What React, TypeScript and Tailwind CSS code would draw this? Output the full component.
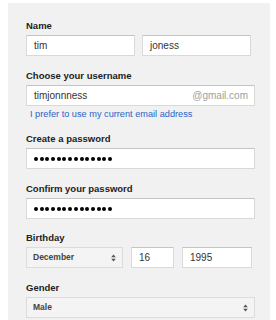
import React from 'react';

const font = { fontFamily: '"Liberation Sans", Arial, sans-serif' };

function Label({ children, className = '' }: { children: React.ReactNode; className?: string }) {
  return <div className={`text-[9.5px] font-bold leading-[12px] text-[#222] mb-[3px] ${className}`}>{children}</div>;
}

function Box({ children, className = '' }: { children?: React.ReactNode; className?: string }) {
  return (
    <div className={`h-[21px] border border-[#d9d9d9] border-t-[#c4c4c4] bg-white flex items-center pl-[7px] pr-[6px] text-[10px] text-[#333] ${className}`}>
      {children}
    </div>
  );
}

function Arrows() {
  return (
    <svg width="5" height="8" viewBox="0 0 5 8" className="ml-auto">
      <path d="M2.5 0.5 L4.8 3.2 L0.2 3.2 Z" fill="#555" />
      <path d="M2.5 7.5 L4.8 4.8 L0.2 4.8 Z" fill="#555" />
    </svg>
  );
}

function Dots() {
  return (
    <div className="flex gap-[1.7px]">
      {Array.from({ length: 14 }).map((_, i) => (
        <span key={i} className="block w-[4px] h-[4px] rounded-full bg-black" />
      ))}
    </div>
  );
}

function Select({ children, className = '' }: { children: React.ReactNode; className?: string }) {
  return (
    <div className={`h-[21px] border border-[#dcdcdc] bg-[#f4f4f4] flex items-center pl-[6px] pr-[6px] text-[8.5px] font-bold text-[#444] ${className}`}>
      {children}
      <Arrows />
    </div>
  );
}

export default function App() {
  return (
    <div className="w-[276px] h-[320px] bg-white pt-[3px] pl-[8px] pr-[6px] overflow-hidden" style={font}>
      <div className="h-full bg-[#f1f1f1] pl-[18px] pr-[15px] pt-[17px]">
        <Label>Name</Label>
        <div className="flex gap-[7px]">
          <Box className="w-[109px]">tim</Box>
          <Box className="w-[109px]">joness</Box>
        </div>

        <Label className="mt-[14px]">Choose your username</Label>
        <Box>
          <span>timjonnness</span>
          <span className="ml-auto text-[#a0a0a0]">@gmail.com</span>
        </Box>
        <a className="block text-[9.2px] leading-[12px] text-[#2b63c8] mt-[2px] ml-[4px]">I prefer to use my current email address</a>

        <Label className="mt-[13px]">Create a password</Label>
        <Box>
          <Dots />
        </Box>

        <Label className="mt-[14px]">Confirm your password</Label>
        <Box>
          <Dots />
        </Box>

        <Label className="mt-[13px]">Birthday</Label>
        <div className="flex gap-[8px]">
          <Select className="w-[97px]">December</Select>
          <Box className="w-[43px]">16</Box>
          <Box className="w-[70px]">1995</Box>
        </div>

        <Label className="mt-[14px]">Gender</Label>
        <Select>Male</Select>
      </div>
    </div>
  );
}
